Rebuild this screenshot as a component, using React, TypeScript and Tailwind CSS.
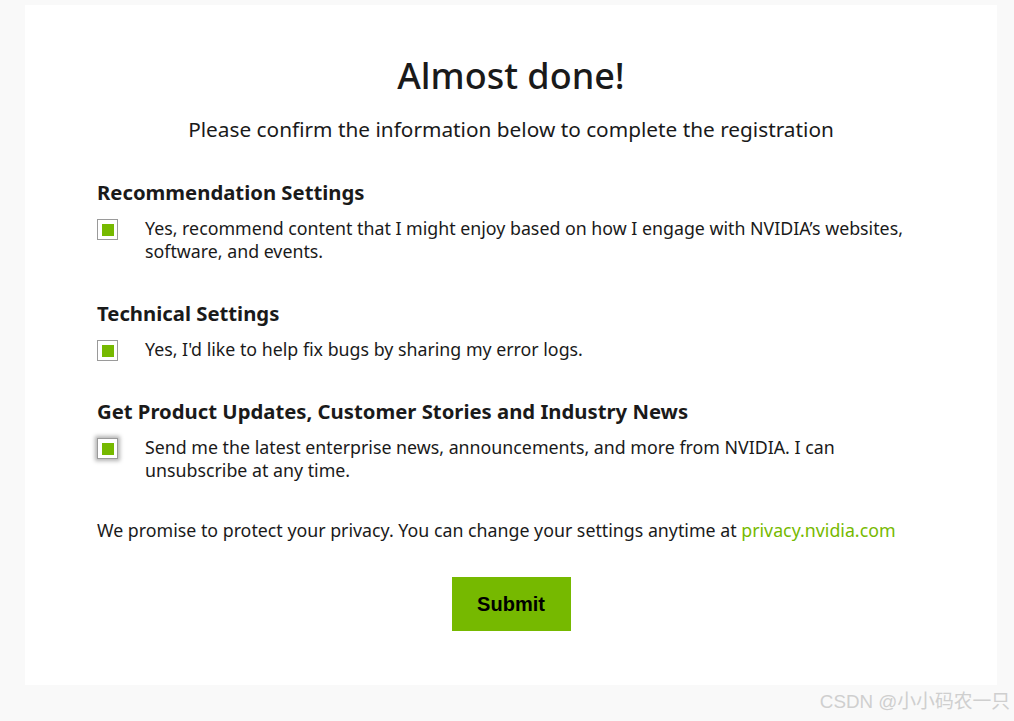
const Check = ({ focus }: { focus?: boolean }) => (
  <span
    className={
      "mt-[2px] flex size-[21px] shrink-0 items-center justify-center border border-[#9a9a9a] bg-white" +
      (focus ? " shadow-[0_0_4px_2px_rgba(0,0,0,0.3)]" : "")
    }
  >
    <span className="size-[12px] bg-[#76b900]" />
  </span>
);

const Option = ({ title, text, focus }: { title: string; text: React.ReactNode; focus?: boolean }) => (
  <section>
    <h2 className="text-[20.3px] font-bold leading-[28px] text-[#1a1a1a]">{title}</h2>
    <label className="mt-[11px] flex gap-[27px]">
      <Check focus={focus} />
      <p className="text-[17.8px] leading-[23px] text-[#1a1a1a]">{text}</p>
    </label>
  </section>
);

export default function App() {
  return (
    <div className="relative min-h-[721px] bg-[#f9f9f9] pl-[25px] pt-[5px] pr-[17px] font-['Noto_Sans',sans-serif]">
      <div className="h-[680px] bg-white px-[72px] pt-[46px]">
        <h1 className="text-center text-[36px] font-medium leading-[50px] text-[#1a1a1a]">Almost done!</h1>
        <p className="mt-[15px] text-center text-[20.8px] leading-[26px] text-[#1a1a1a]">
          Please confirm the information below to complete the registration
        </p>

        <div className="mt-[36px] flex flex-col gap-[36px]">
          <Option
            title="Recommendation Settings"
            text={
              <>
                Yes, recommend content that I might enjoy based on how I engage with NVIDIA’s websites,
                <br />
                software, and events.
              </>
            }
          />
          <Option title="Technical Settings" text="Yes, I'd like to help fix bugs by sharing my error logs." />
          <Option
            title="Get Product Updates, Customer Stories and Industry News"
            focus
            text={
              <>
                Send me the latest enterprise news, announcements, and more from NVIDIA. I can
                <br />
                unsubscribe at any time.
              </>
            }
          />
        </div>

        <p className="mt-[37px] text-[17.8px] leading-[23px] text-[#1a1a1a]">
          We promise to protect your privacy. You can change your settings anytime at{" "}
          <a href="#" className="text-[#76b900]">
            privacy.nvidia.com
          </a>
        </p>

        <div className="mt-[35px] flex justify-center">
          <button className="h-[54px] w-[119px] bg-[#76b900] font-['Liberation_Sans',sans-serif] text-[20px] font-bold text-black">
            Submit
          </button>
        </div>
      </div>
      <span className="absolute bottom-[5px] right-[4px] font-['Liberation_Sans','Noto_Sans_CJK_SC',sans-serif] text-[18.8px] text-[#cfcfcf]">
        CSDN @小小码农一只
      </span>
    </div>
  );
}
